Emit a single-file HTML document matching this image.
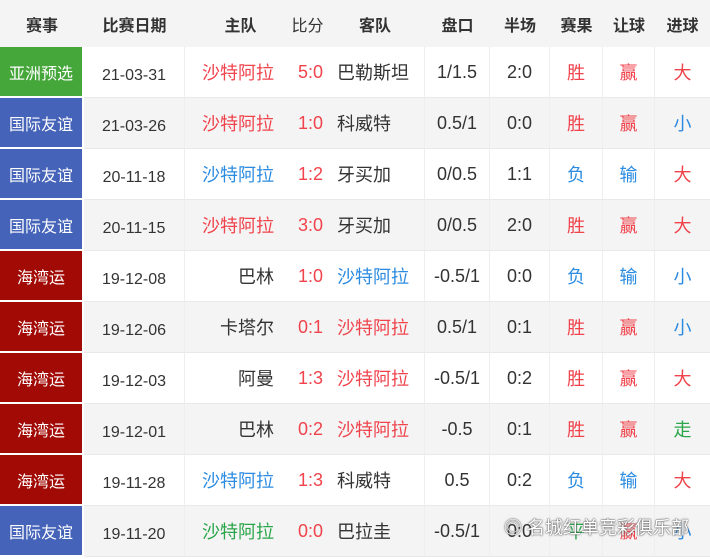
<!DOCTYPE html><html><head><meta charset="utf-8"><style>
body{margin:0;background:#fff;font-family:"Liberation Sans","Noto Sans CJK SC",sans-serif;width:710px;height:559px;overflow:hidden;position:relative}
.row{display:flex;height:51px;}
.row>div{display:flex;align-items:center;justify-content:center;color:#333;font-size:18px;box-sizing:border-box;height:100%;border-bottom:1px solid #e9e9e9}
.hd{height:47px;background:#eee;}
.hd>div{font-size:16px;font-weight:bold;border:none!important}
.row:nth-child(odd){background:#f4f4f4}
.w1{width:84px}.w2{width:101px}.w3{width:105px}.w4{width:35px}.w5{width:100px}.w6{width:65px}.w7{width:60px}.w8{width:53px}.w9{width:52px}.w10{width:55px}
.c{color:#fff!important;font-size:16px!important;border-right:2px solid #fff;border-bottom:2px solid #fff!important}
.d{font-size:16px!important;border-right:1px solid #eee;padding-top:8px}
.h{justify-content:flex-end!important;padding-right:16px}
.a{justify-content:flex-start!important;padding-left:12px;border-right:1px solid #eee}
.s{padding-left:6px}
.p,.b,.r,.q{border-right:1px solid #eee}
.g{background:#45a63a}.bl{background:#4563b8}.dr{background:#a20a05}
.R{color:#f0434c!important}.B{color:#2b8be0!important}.G{color:#2aa64a!important}
</style></head><body>
<div class="row hd"><div class="w1">赛事</div><div class="w2">比赛日期</div><div class="w3" style="padding-left:6px">主队</div><div class="w4" style="font-weight:normal">比分</div><div class="w5">客队</div><div class="w6">盘口</div><div class="w7">半场</div><div class="w8">赛果</div><div class="w9">让球</div><div class="w10">进球</div></div>
<div class="row"><div class="w1 c g">亚洲预选</div><div class="w2 d">21-03-31</div><div class="w3 h R">沙特阿拉</div><div class="w4 s R">5:0</div><div class="w5 a">巴勒斯坦</div><div class="w6 p">1/1.5</div><div class="w7 b">2:0</div><div class="w8 r R">胜</div><div class="w9 q R">赢</div><div class="w10 R">大</div></div>
<div class="row"><div class="w1 c bl">国际友谊</div><div class="w2 d">21-03-26</div><div class="w3 h R">沙特阿拉</div><div class="w4 s R">1:0</div><div class="w5 a">科威特</div><div class="w6 p">0.5/1</div><div class="w7 b">0:0</div><div class="w8 r R">胜</div><div class="w9 q R">赢</div><div class="w10 B">小</div></div>
<div class="row"><div class="w1 c bl">国际友谊</div><div class="w2 d">20-11-18</div><div class="w3 h B">沙特阿拉</div><div class="w4 s R">1:2</div><div class="w5 a">牙买加</div><div class="w6 p">0/0.5</div><div class="w7 b">1:1</div><div class="w8 r B">负</div><div class="w9 q B">输</div><div class="w10 R">大</div></div>
<div class="row"><div class="w1 c bl">国际友谊</div><div class="w2 d">20-11-15</div><div class="w3 h R">沙特阿拉</div><div class="w4 s R">3:0</div><div class="w5 a">牙买加</div><div class="w6 p">0/0.5</div><div class="w7 b">2:0</div><div class="w8 r R">胜</div><div class="w9 q R">赢</div><div class="w10 R">大</div></div>
<div class="row"><div class="w1 c dr">海湾运</div><div class="w2 d">19-12-08</div><div class="w3 h">巴林</div><div class="w4 s R">1:0</div><div class="w5 a B">沙特阿拉</div><div class="w6 p">-0.5/1</div><div class="w7 b">0:0</div><div class="w8 r B">负</div><div class="w9 q B">输</div><div class="w10 B">小</div></div>
<div class="row"><div class="w1 c dr">海湾运</div><div class="w2 d">19-12-06</div><div class="w3 h">卡塔尔</div><div class="w4 s R">0:1</div><div class="w5 a R">沙特阿拉</div><div class="w6 p">0.5/1</div><div class="w7 b">0:1</div><div class="w8 r R">胜</div><div class="w9 q R">赢</div><div class="w10 B">小</div></div>
<div class="row"><div class="w1 c dr">海湾运</div><div class="w2 d">19-12-03</div><div class="w3 h">阿曼</div><div class="w4 s R">1:3</div><div class="w5 a R">沙特阿拉</div><div class="w6 p">-0.5/1</div><div class="w7 b">0:2</div><div class="w8 r R">胜</div><div class="w9 q R">赢</div><div class="w10 R">大</div></div>
<div class="row"><div class="w1 c dr">海湾运</div><div class="w2 d">19-12-01</div><div class="w3 h">巴林</div><div class="w4 s R">0:2</div><div class="w5 a R">沙特阿拉</div><div class="w6 p">-0.5</div><div class="w7 b">0:1</div><div class="w8 r R">胜</div><div class="w9 q R">赢</div><div class="w10 G">走</div></div>
<div class="row"><div class="w1 c dr">海湾运</div><div class="w2 d">19-11-28</div><div class="w3 h B">沙特阿拉</div><div class="w4 s R">1:3</div><div class="w5 a">科威特</div><div class="w6 p">0.5</div><div class="w7 b">0:2</div><div class="w8 r B">负</div><div class="w9 q B">输</div><div class="w10 R">大</div></div>
<div class="row"><div class="w1 c bl">国际友谊</div><div class="w2 d">19-11-20</div><div class="w3 h G">沙特阿拉</div><div class="w4 s R">0:0</div><div class="w5 a">巴拉圭</div><div class="w6 p">-0.5/1</div><div class="w7 b">0:0</div><div class="w8 r G">平</div><div class="w9 q R">赢</div><div class="w10 B">小</div></div>
<div style="position:absolute;left:504px;top:514px;font-size:18px;color:#fff;text-shadow:0 0 2px #555,0 0 1px #333;">◎ 名城红单竞彩俱乐部</div>
</body></html>
